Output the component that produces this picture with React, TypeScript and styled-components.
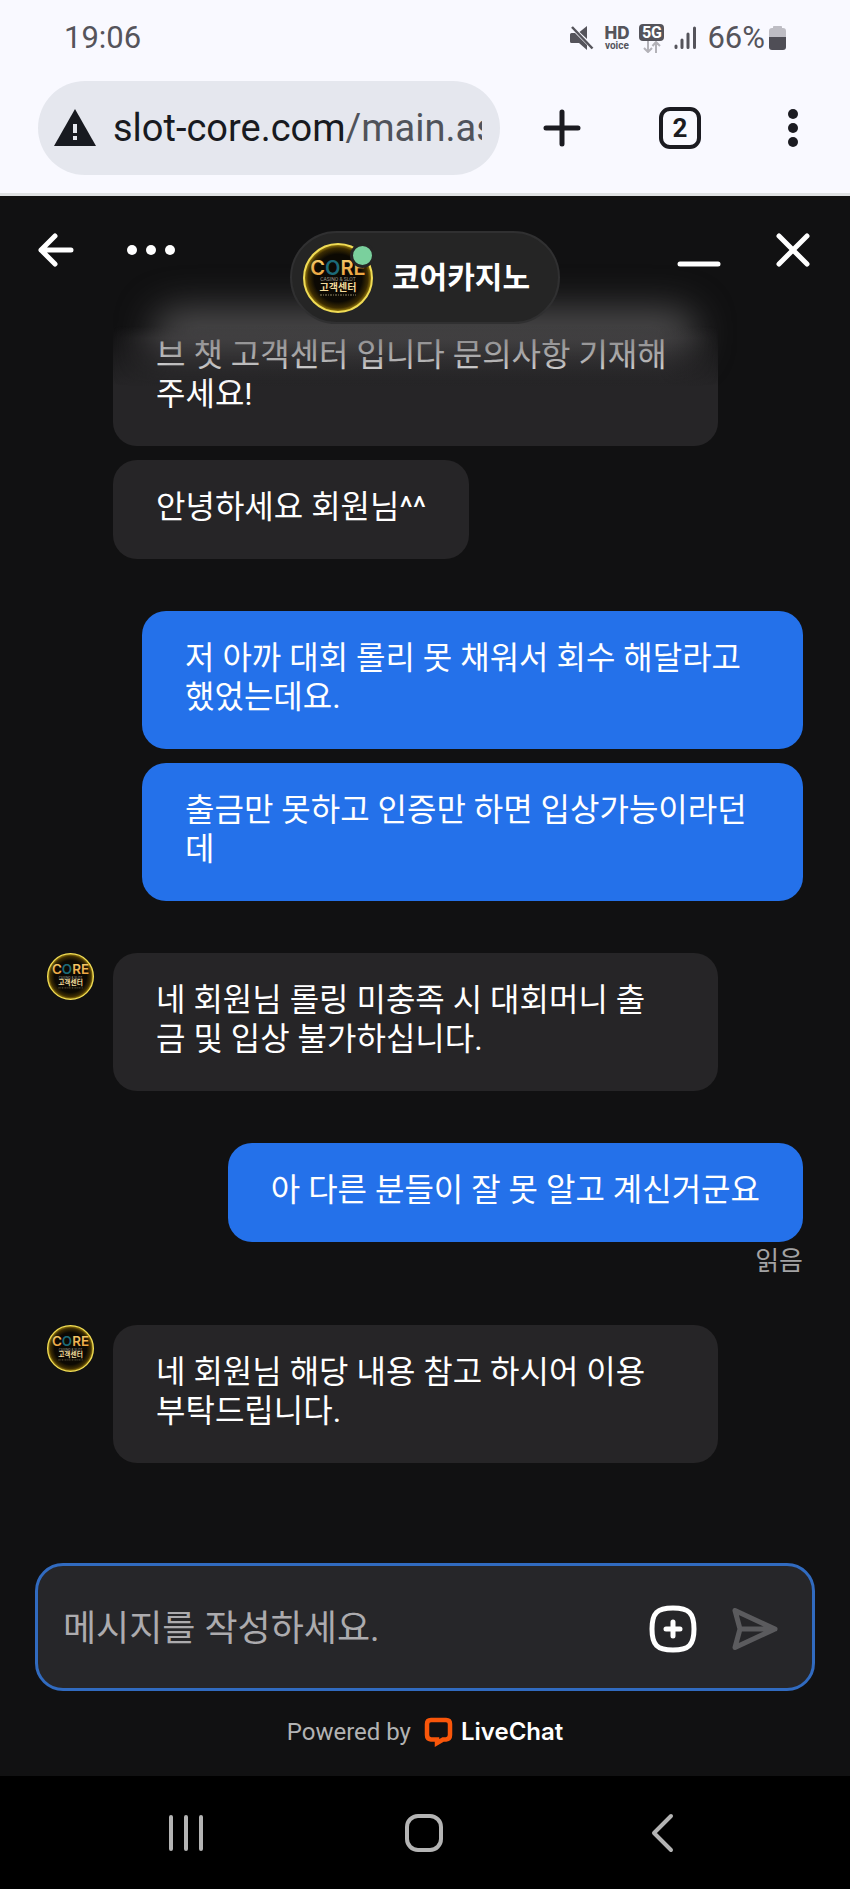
import React from "react";
import styled, { createGlobalStyle } from "styled-components";

const GlobalStyle = createGlobalStyle`
  *, *::before, *::after { box-sizing: border-box; }
  html, body { margin: 0; background: #000; }
  body, button, input { font-family: Roboto, "Noto Sans CJK KR", sans-serif; }
`;

const Screen = styled.div`
  display: flex;
  flex-direction: column;
  min-height: 100vh;
`;

const IconButton = styled.button`
  display: flex;
  flex: none;
  padding: 0;
  border: 0;
  background: none;
  color: inherit;
  cursor: pointer;
`;

/* ---------- Phone status bar ---------- */

const BrowserTop = styled.header`
  background: #f9f9ff;
  border-bottom: 3px solid #dfe1e3;
  padding-bottom: 18px;
`;

const StatusBar = styled.div`
  display: flex;
  align-items: center;
  height: 81px;
  padding: 0 64px 5px;
  color: #55545b;
  font-size: 31px;
  line-height: 36px;
`;

const StatusIcons = styled.div`
  display: flex;
  align-items: center;
  gap: 10px;
  margin-left: auto;
`;

const BatteryLevel = styled.span`
  display: flex;
  align-items: center;
  gap: 4px;
`;

const HdVoice = styled.span`
  display: flex;
  flex-direction: column;
  align-items: center;
  font-weight: 700;
  font-size: 10px;
  line-height: 10px;
`;

const HdLabel = styled.span`
  font-family: Inter, sans-serif;
  font-weight: 800;
  font-size: 17px;
  line-height: 15px;
`;

const Network = styled.span`
  display: flex;
  flex-direction: column;
  align-items: center;
`;

const NetworkBadge = styled.span`
  width: 25px;
  border-radius: 4px;
  background: #55545b;
  color: #fff;
  font-weight: 700;
  font-size: 16px;
  line-height: 17px;
  text-align: center;
`;

/* ---------- Browser toolbar ---------- */

const Toolbar = styled.div`
  display: flex;
  align-items: center;
  padding: 0 41px 0 38px;
  gap: 41px;
  color: #1b1b21;
`;

const AddressBar = styled.div`
  flex: 1;
  min-width: 0;
  display: flex;
  align-items: center;
  gap: 17px;
  height: 94px;
  padding: 0 18px 0 16px;
  border-radius: 47px;
  background: #e5e7ee;
`;

const Address = styled.a`
  flex: 1;
  overflow: hidden;
  white-space: nowrap;
  color: #50535a;
  font-size: 38px;
  line-height: 48px;
  text-decoration: none;
`;

const Host = styled.span`
  color: #181a20;
`;

const ToolbarActions = styled.div`
  display: flex;
  align-items: center;
  gap: 76px;
`;

const TabCount = styled(IconButton)`
  align-items: center;
  justify-content: center;
  width: 42px;
  height: 42px;
  border: 4px solid #1b1b21;
  border-radius: 11px;
  font-weight: 700;
  font-size: 26px;
  line-height: 30px;
`;

/* ---------- Chat ---------- */

const Chat = styled.main`
  position: relative;
  flex: 1;
  display: flex;
  flex-direction: column;
  background: #111112;
`;

const ChatHeader = styled.div`
  position: relative;
  z-index: 2;
  display: grid;
  grid-template-columns: 1fr auto 1fr;
  align-items: start;
  padding: 35px 37px 2px;
  color: #fff;
`;

const HeaderActions = styled.div<{ $end?: boolean }>`
  display: flex;
  gap: 50px;
  justify-content: ${(p) => (p.$end ? "flex-end" : "flex-start")};
`;

const AgentPill = styled.div`
  display: flex;
  align-items: center;
  gap: 19px;
  height: 93px;
  padding: 0 28px 0 11px;
  border: 2px solid #303031;
  border-radius: 47px;
  background: #252525;
`;

const AgentAvatar = styled.div`
  position: relative;
  display: flex;
`;

const OnlineDot = styled.span`
  position: absolute;
  top: 0;
  right: -2px;
  width: 25px;
  height: 25px;
  border: 3px solid #252525;
  border-radius: 50%;
  background: #7ad09d;
`;

const AgentName = styled.h1`
  margin: 0;
  font-weight: 700;
  font-size: 30px;
  line-height: 40px;
`;

const HeaderGlow = styled.div`
  position: absolute;
  top: 112px;
  left: 18%;
  right: 18%;
  height: 50px;
  border-radius: 25px;
  background: #4b4a4b;
  filter: blur(18px);
`;

const Messages = styled.section`
  position: relative;
  z-index: 1;
  flex: 1;
  display: flex;
  flex-direction: column;
  gap: 52px;
  padding: 0 47px 54px;
`;

const Group = styled.div`
  display: flex;
  align-items: flex-start;
  gap: 19px;
`;

const AvatarSlot = styled.div`
  flex: none;
  display: flex;
  width: 47px;
`;

const Stack = styled.div<{ $own?: boolean }>`
  flex: 1;
  display: flex;
  flex-direction: column;
  gap: 14px;
  align-items: ${(p) => (p.$own ? "flex-end" : "flex-start")};
  padding-${(p) => (p.$own ? "left" : "right")}: ${(p) => (p.$own ? 95 : 85)}px;
`;

const Bubble = styled.p<{ $own?: boolean; $full?: boolean }>`
  margin: 0;
  width: ${(p) => (p.$full ? "100%" : "auto")};
  padding: 28px 43px 32px;
  border-radius: 24px;
  background: ${(p) => (p.$own ? "#2471ea" : "#262527")};
  color: #fff;
  font-size: 32px;
  line-height: 39px;
  white-space: pre-line;
`;

const FadedBubble = styled(Bubble)`
  position: relative;
  padding-top: 10px;
  border-radius: 0 0 24px 24px;
  background: linear-gradient(transparent, #262527 60px);

  &::after {
    content: "";
    position: absolute;
    inset: 0 0 auto;
    height: 60px;
    background: linear-gradient(
      rgba(70, 68, 70, 0),
      rgba(68, 66, 68, 0.6) 12px,
      rgba(60, 58, 60, 0.4) 34px,
      rgba(54, 52, 54, 0)
    );
    mask-image: linear-gradient(90deg, transparent, #000 60px, #000 calc(100% - 60px), transparent);
  }
`;

const ReadMark = styled.span`
  margin-top: -14px;
  padding-top: 7px;
  color: #a3a3a4;
  font-size: 26px;
  line-height: 24px;
`;

/* ---------- Composer ---------- */

const Composer = styled.form`
  display: flex;
  align-items: center;
  gap: 34px;
  height: 128px;
  margin: 46px 35px 0;
  padding: 3px 33px 0 25px;
  border: 3px solid #316bc0;
  border-radius: 28px;
  background: #262629;
  color: #fff;
`;

const MessageInput = styled.input`
  flex: 1;
  min-width: 0;
  padding: 0;
  border: 0;
  outline: 0;
  background: none;
  color: #fff;
  font-size: 36px;
  line-height: 48px;

  &::placeholder {
    color: #acabae;
    opacity: 1;
  }
`;

const PoweredBy = styled.footer`
  display: flex;
  align-items: center;
  justify-content: center;
  height: 85px;
  padding-bottom: 4px;
  gap: 13px;
  color: #b3b3b3;
  font-size: 24px;
  line-height: 32px;
`;

const Brand = styled.a`
  display: flex;
  align-items: center;
  gap: 8px;
  color: #fff;
  font-family: Inter, sans-serif;
  font-weight: 600;
  font-size: 24px;
  text-decoration: none;
`;

/* ---------- System navigation ---------- */

const SystemNav = styled.nav`
  display: grid;
  grid-template-columns: repeat(3, 28%);
  justify-content: center;
  justify-items: center;
  align-items: center;
  height: 113px;
  background: #000;
  color: #b4b4b4;
`;

/* ---------- Drawings ---------- */

const CoreLogo = ({ size, id }: { size: number; id: string }) => (
  <svg width={size} height={size} viewBox="0 0 70 70" role="img" aria-label="CORE">
    <defs>
      <radialGradient id={`${id}-disc`}>
        <stop offset="0.7" stopColor="#0c0903" />
        <stop offset="0.88" stopColor="#3c2c02" />
        <stop offset="1" stopColor="#a88a10" />
      </radialGradient>
      <linearGradient id={`${id}-gold`} x1="0" y1="0" x2="0" y2="1">
        <stop offset="0" stopColor="#f7d070" />
        <stop offset="1" stopColor="#e89a35" />
      </linearGradient>
    </defs>
    <circle cx="35" cy="35" r="34" fill={`url(#${id}-disc)`} stroke="#f0dc55" strokeWidth="2" />
    <text x="35" y="32" textAnchor="middle" fontFamily="Inter, sans-serif" fontWeight="600" fontSize="20" fill={`url(#${id}-gold)`}>
      C<tspan fill="#1c6a78">O</tspan>RE
    </text>
    <text x="35" y="38" textAnchor="middle" fontFamily="Roboto, sans-serif" fontSize="5" fill="#9a9890">
      CASINO &amp; SLOT
    </text>
    <text x="35" y="48" textAnchor="middle" fontFamily='"Noto Sans CJK KR", sans-serif' fontWeight="700" fontSize="10" fill="#f3dc9c">
      고객센터
    </text>
    <path d="M17 52H53" stroke="#8c8464" strokeWidth="1" strokeDasharray="2 1 1 1" />
  </svg>
);

const MuteIcon = () => (
  <svg width="24" height="26" viewBox="0 0 24 26" fill="currentColor" aria-label="음소거">
    <path d="M0 9.5Q0 8 1.5 8H5L17 20V25L9 18H1.500Q0 18 0 16.500Z" />
    <path d="M17 1V14L9.500 7Z" />
    <path d="M2 2L22.500 23.500" stroke="currentColor" strokeWidth="2.500" />
  </svg>
);

const DataArrows = () => (
  <svg width="20" height="12" viewBox="0 0 20 12" fill="none" stroke="#b3b2b8" strokeWidth="2">
    <path d="M6 0V11M2 7L6 11L10 7M14 12V1M10.500 5L14 1L18 5" />
  </svg>
);

const SignalIcon = () => (
  <svg width="23" height="24" viewBox="0 0 23 24" stroke="currentColor" strokeWidth="3" strokeLinecap="round">
    <path d="M2 20V21.500M8 14V21.500M14 8V21.500M20.500 2V21.500" />
  </svg>
);

const BatteryIcon = () => (
  <svg width="17" height="26" viewBox="0 0 17 26">
    <path d="M4 3V1.500Q4 1 5 1H12Q13 1 13 1.500V3H14Q17 3 17 6V14H0V6Q0 3 3 3Z" fill="#bebdc4" />
    <path d="M0 12H17V22Q17 25 14 25H3Q0 25 0 22Z" fill="#4f4e56" />
  </svg>
);

const WarningIcon = () => (
  <svg width="42" height="38" viewBox="0 0 42 38" aria-label="주의">
    <path d="M21 0L42 37H0Z" fill="#181a20" />
    <path d="M19 15H23V24H19ZM19 27H23V31H19Z" fill="#e5e7ee" />
  </svg>
);

const LiveChatIcon = () => (
  <svg width="29" height="30" viewBox="0 0 29 30" fill="none">
    <path
      d="M7 3H22Q26 3 26 7V18Q26 22 22 22.500H19L13 26V22.500H7Q3 22 3 18V7Q3 3 7 3Z"
      stroke="#f9560a"
      strokeWidth="4.500"
      strokeLinejoin="miter"
    />
  </svg>
);

const App = () => (
  <Screen>
    <GlobalStyle />
    <BrowserTop>
      <StatusBar>
        <time>19:06</time>
        <StatusIcons>
          <MuteIcon />
          <HdVoice>
            <HdLabel>HD</HdLabel>
            voice
          </HdVoice>
          <Network>
            <NetworkBadge>5G</NetworkBadge>
            <DataArrows />
          </Network>
          <SignalIcon />
          <BatteryLevel>
            66%
            <BatteryIcon />
          </BatteryLevel>
        </StatusIcons>
      </StatusBar>
      <Toolbar>
        <AddressBar>
          <WarningIcon />
          <Address href="#">
            <Host>slot-core.com</Host>/main.as
          </Address>
        </AddressBar>
        <ToolbarActions>
          <IconButton aria-label="새 탭">
            <svg width="42" height="42" viewBox="0 0 42 42" stroke="currentColor" strokeWidth="5" strokeLinecap="round">
              <path d="M21 5V37M5 21H37" />
            </svg>
          </IconButton>
          <TabCount aria-label="탭 2개">2</TabCount>
          <IconButton aria-label="메뉴">
            <svg width="32" height="42" viewBox="0 0 32 42" fill="currentColor">
              <circle cx="16" cy="7" r="5" />
              <circle cx="16" cy="21" r="5" />
              <circle cx="16" cy="35" r="5" />
            </svg>
          </IconButton>
        </ToolbarActions>
      </Toolbar>
    </BrowserTop>

    <Chat>
      <HeaderGlow />
      <ChatHeader>
        <HeaderActions>
          <IconButton aria-label="뒤로">
            <svg width="38" height="38" viewBox="0 0 38 38" fill="none" stroke="currentColor" strokeWidth="5" strokeLinecap="round" strokeLinejoin="round">
              <path d="M18 5L4 19L18 33M4 19H34" />
            </svg>
          </IconButton>
          <IconButton aria-label="더보기">
            <svg width="52" height="38" viewBox="0 0 52 38" fill="currentColor">
              <circle cx="7" cy="19" r="5" />
              <circle cx="26" cy="19" r="5" />
              <circle cx="45" cy="19" r="5" />
            </svg>
          </IconButton>
        </HeaderActions>
        <AgentPill>
          <AgentAvatar>
            <CoreLogo size={70} id="header" />
            <OnlineDot />
          </AgentAvatar>
          <AgentName>코어카지노</AgentName>
        </AgentPill>
        <HeaderActions $end>
          <IconButton aria-label="최소화">
            <svg width="52" height="38" viewBox="0 0 52 38" stroke="currentColor" strokeWidth="5" strokeLinecap="round">
              <path d="M7 33H45" />
            </svg>
          </IconButton>
          <IconButton aria-label="닫기">
            <svg width="38" height="38" viewBox="0 0 38 38" stroke="currentColor" strokeWidth="5" strokeLinecap="round">
              <path d="M4 5L32 33M32 5L4 33" />
            </svg>
          </IconButton>
        </HeaderActions>
      </ChatHeader>

      <Messages>
        <Group>
          <AvatarSlot />
          <Stack>
            <FadedBubble $full>{"브 챗 고객센터 입니다 문의사항 기재해\n주세요!"}</FadedBubble>
            <Bubble>안녕하세요 회원님^^</Bubble>
          </Stack>
        </Group>
        <Group>
          <Stack $own>
            <Bubble $own $full>{"저 아까 대회 롤리 못 채워서 회수 해달라고\n했었는데요."}</Bubble>
            <Bubble $own $full>{"출금만 못하고 인증만 하면 입상가능이라던\n데"}</Bubble>
          </Stack>
        </Group>
        <Group>
          <AvatarSlot>
            <CoreLogo size={47} id="first" />
          </AvatarSlot>
          <Stack>
            <Bubble $full>{"네 회원님 롤링 미충족 시 대회머니 출\n금 및 입상 불가하십니다."}</Bubble>
          </Stack>
        </Group>
        <Group>
          <Stack $own>
            <Bubble $own>아 다른 분들이 잘 못 알고 계신거군요</Bubble>
            <ReadMark>읽음</ReadMark>
          </Stack>
        </Group>
        <Group>
          <AvatarSlot>
            <CoreLogo size={47} id="second" />
          </AvatarSlot>
          <Stack>
            <Bubble $full>{"네 회원님 해당 내용 참고 하시어 이용\n부탁드립니다."}</Bubble>
          </Stack>
        </Group>
      </Messages>

      <Composer onSubmit={(e) => e.preventDefault()}>
        <MessageInput aria-label="메시지" placeholder="메시지를 작성하세요." />
        <IconButton type="button" aria-label="첨부">
          <svg width="48" height="48" viewBox="0 0 48 48" fill="none" stroke="currentColor" strokeWidth="5" strokeLinecap="round">
            <path d="M24 3Q36 3 40.500 7.500Q45 12 45 24Q45 36 40.500 40.500Q36 45 24 45Q12 45 7.500 40.500Q3 36 3 24Q3 12 7.500 7.500Q12 3 24 3Z" />
            <path d="M24 17V31M17 24H31" />
          </svg>
        </IconButton>
        <IconButton aria-label="보내기">
          <svg width="48" height="48" viewBox="0 0 48 48" fill="none" stroke="#5b5b5e" strokeWidth="5" strokeLinecap="round" strokeLinejoin="round">
            <path d="M4 5.500L44 24L4 42.500L9 24ZM9 24H44" />
          </svg>
        </IconButton>
      </Composer>

      <PoweredBy>
        Powered by
        <Brand href="#">
          <LiveChatIcon />
          LiveChat
        </Brand>
      </PoweredBy>
    </Chat>

    <SystemNav aria-label="시스템">
      <IconButton aria-label="최근 앱">
        <svg width="40" height="40" viewBox="0 0 40 40" stroke="currentColor" strokeWidth="4" strokeLinecap="round">
          <path d="M4 4V36M19 4V36M34 4V36" />
        </svg>
      </IconButton>
      <IconButton aria-label="홈">
        <svg width="40" height="40" viewBox="0 0 40 40" fill="none" stroke="currentColor" strokeWidth="4">
          <rect x="2" y="3" width="34" height="34" rx="11" />
        </svg>
      </IconButton>
      <IconButton aria-label="뒤로 가기">
        <svg width="40" height="40" viewBox="0 0 40 40" fill="none" stroke="currentColor" strokeWidth="4" strokeLinecap="round" strokeLinejoin="round">
          <path d="M28 3L11 20L28 37" />
        </svg>
      </IconButton>
    </SystemNav>
  </Screen>
);

export default App;
